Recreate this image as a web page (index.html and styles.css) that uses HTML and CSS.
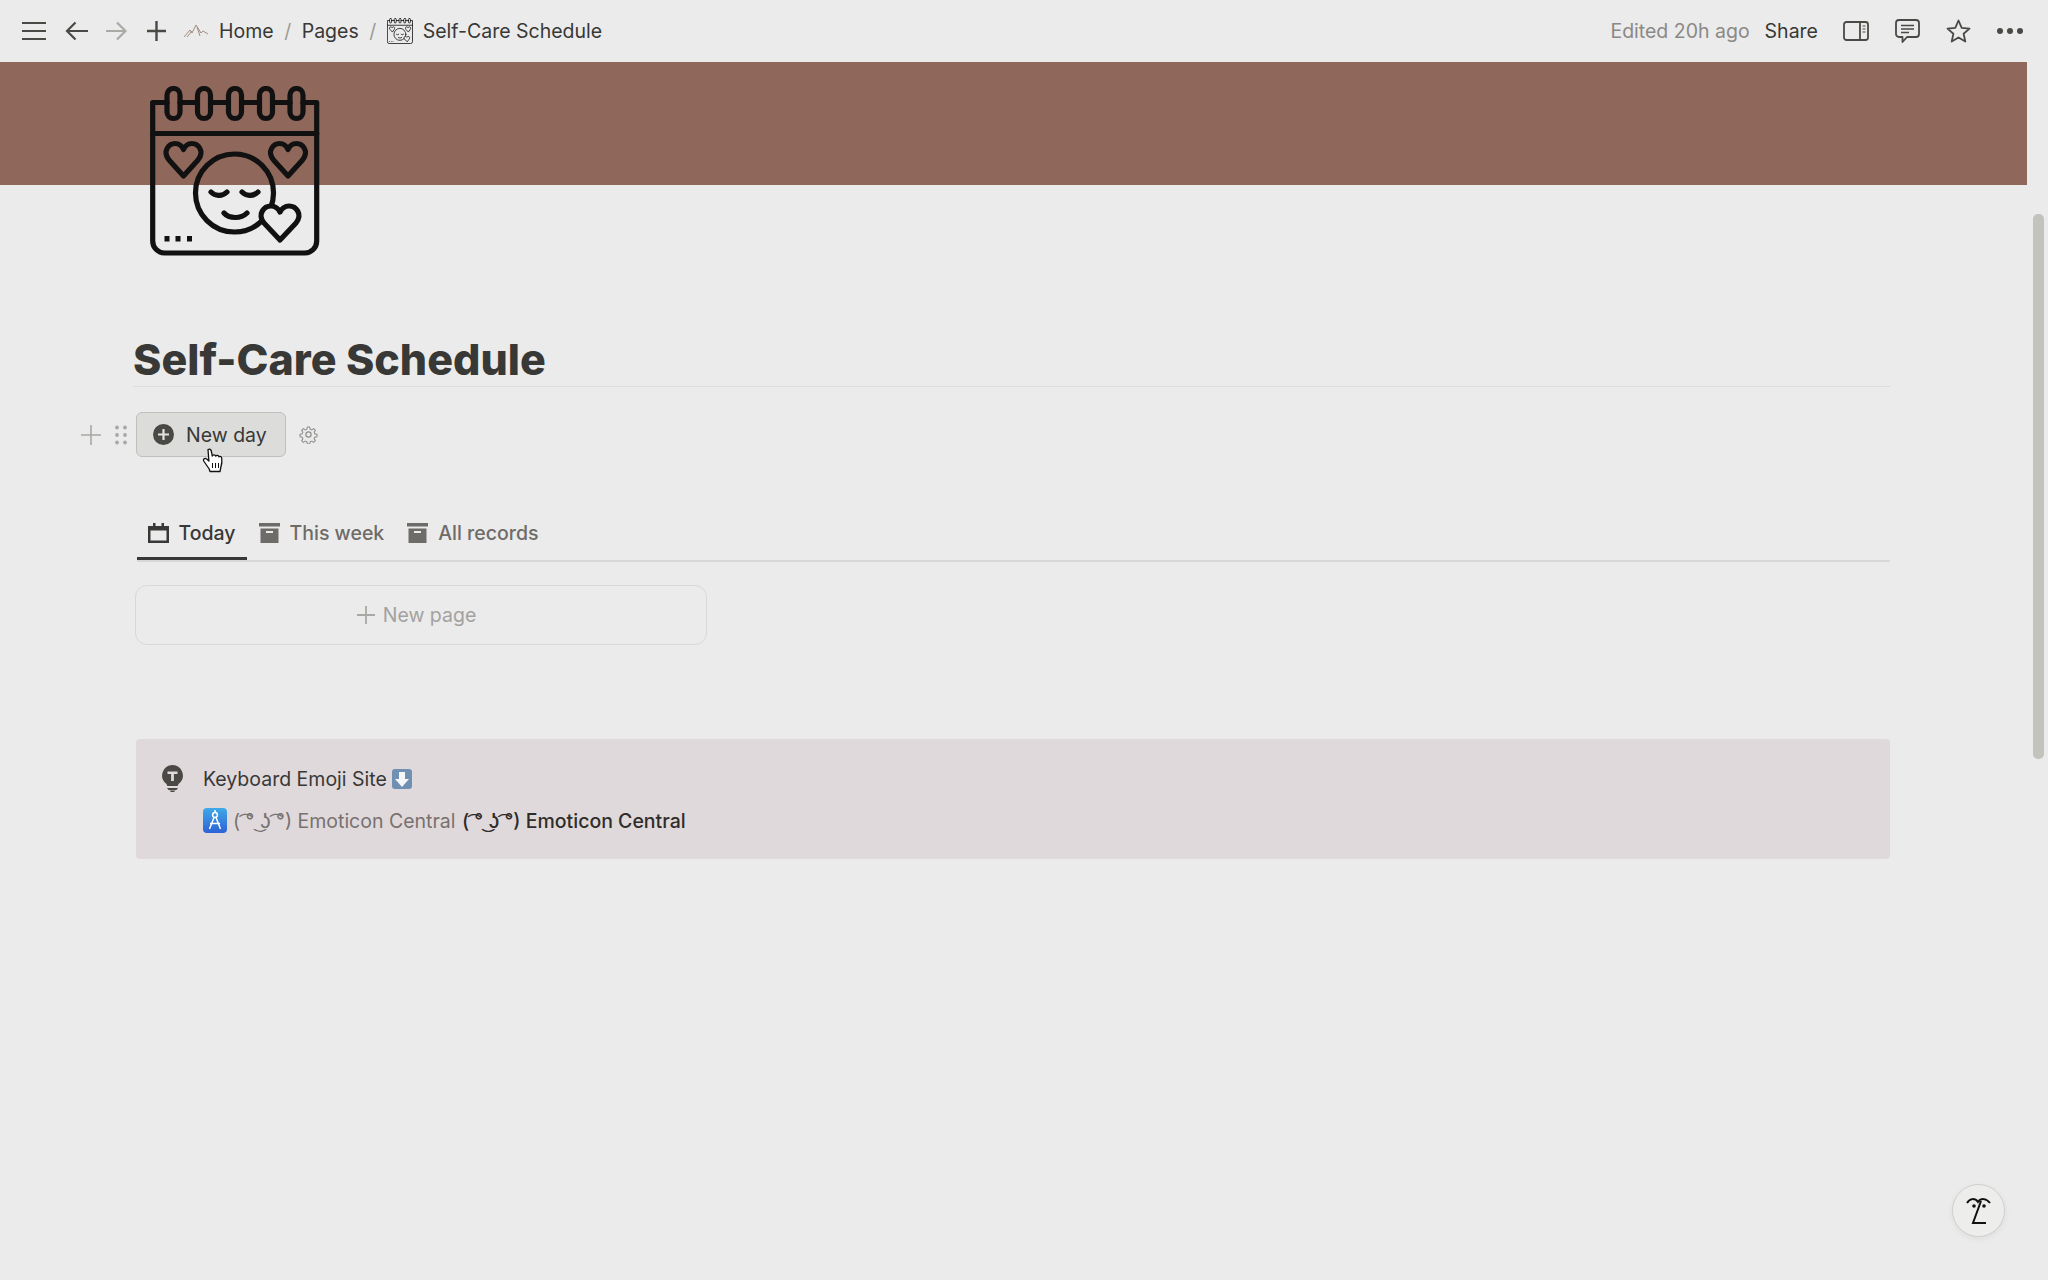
FILE: index.html
```html
<!DOCTYPE html>
<html lang="en">
<head>
<meta charset="utf-8">
<title>Self-Care Schedule</title>
<link rel="stylesheet" href="styles.css">
</head>
<body>
<svg class="defs" width="0" height="0" aria-hidden="true">
  <symbol id="cal" viewBox="0 0 170 170">
    <g fill="none" stroke="#111" stroke-width="5.200" stroke-linejoin="round" stroke-linecap="round">
      <path d="M17 16.500H2.700V155a12 12 0 0 0 12 12h140a12 12 0 0 0 12-12V16.500H153M30 16.500H47M61 16.500H78M92 16.500H109M123 16.500H140"/>
      <path d="M2.700 47.500H166.700"/>
      <rect x="17" y="2.500" width="13" height="30" rx="6.500"/>
      <rect x="47.500" y="2.500" width="13" height="30" rx="6.500"/>
      <rect x="78.500" y="2.500" width="13" height="30" rx="6.500"/>
      <rect x="109.500" y="2.500" width="13" height="30" rx="6.500"/>
      <rect x="140" y="2.500" width="13" height="30" rx="6.500"/>
      <path d="M33.500 90L19 74C12 65 19 57.500 25 57.500C29 57.500 32 60 33.500 63.500C35 60 38 57.500 42 57.500C48 57.500 55 65 48 74Z"/>
      <path d="M138 90L123.500 74C116.500 65 123.500 57.500 129.500 57.500C133.500 57.500 136.500 60 138 63.500C139.500 60 142.500 57.500 146.500 57.500C152.500 57.500 159.500 65 152.500 74Z"/>
      <circle cx="84.500" cy="107" r="39"/>
      <path fill="#ebebeb" d="M130 154L114 137C107 128 114 120 121 120C125 120 128.500 123 130 126C131.500 123 135 120 139 120C146 120 153 128 146 137Z"/>
      <path d="M61 106c4 4 11 5 16 0M92 106c4 4 11 5 16 0M74 127c5 6 17 6 23 0"/>
    </g>
    <path fill="#111" d="M14.500 150h5v5.500h-5zM25.500 150h5v5.500h-5zM37 150h5v5.500h-5z"/>
  </symbol>
  <symbol id="box" viewBox="0 0 21 20">
    <path fill="#6e6c68" d="M0 0h21v3.500H0zM1.500 5.500h18V20h-18zM7 8v2h7V8z" fill-rule="evenodd"/>
  </symbol>
</svg>

<header class="topbar">
  <svg class="ic burger" width="24" height="20" viewBox="0 0 24 20"><path d="M0 2H24M0 10H24M0 18H24" stroke="#4a4945" stroke-width="2.200" fill="none"/></svg>
  <svg class="ic back" width="23" height="20" viewBox="0 0 23 20"><path d="M23 10H2M10.500 1.500L2 10l8.500 8.500" stroke="#4a4945" stroke-width="2.200" fill="none"/></svg>
  <svg class="ic forward" width="21" height="20" viewBox="0 0 21 20"><path d="M0 10H19M11 1.500L19.500 10 11 18.500" stroke="#aaa9a6" stroke-width="2.200" fill="none"/></svg>
  <svg class="ic plus" width="19" height="20" viewBox="0 0 19 20"><path d="M9.500 0V20M0 10H19" stroke="#4a4945" stroke-width="2.400" fill="none"/></svg>
  <svg class="ic home" width="24" height="14" viewBox="0 0 24 14"><path d="M0 13L6 6l2 3 4-8 5 8 2-2 5 3M3 13l5-6M13 3l3 9" stroke="#a08c80" stroke-width="1" fill="none"/></svg>
  <span class="crumb">Home</span>
  <span class="sep">/</span>
  <span class="crumb">Pages</span>
  <span class="sep">/</span>
  <svg class="ic mini" width="26" height="26"><use href="#cal"/></svg>
  <span class="crumb">Self-Care Schedule</span>
  <span class="spacer"></span>
  <span class="edited">Edited 20h ago</span>
  <span class="share">Share</span>
  <svg class="ic act" width="26" height="20" viewBox="0 0 26 20"><rect x="1" y="1" width="24" height="18" rx="2.500" stroke="#4a4945" stroke-width="1.800" fill="none"/><path d="M17 1V19" stroke="#4a4945" stroke-width="1.800"/><path d="M19.500 5h3M19.500 8h3M19.500 11h3" stroke="#4a4945" stroke-width="1.200"/></svg>
  <svg class="ic act" width="25" height="24" viewBox="0 0 25 24"><path d="M4 1h17a3 3 0 0 1 3 3v11a3 3 0 0 1-3 3H12l-4.500 5v-5H4a3 3 0 0 1-3-3V4a3 3 0 0 1 3-3z" stroke="#4a4945" stroke-width="1.800" fill="none" stroke-linejoin="round"/><path d="M6 6.500h13M6 10h13M6 13.500h8" stroke="#4a4945" stroke-width="1.400"/></svg>
  <svg class="ic act" width="25" height="24" viewBox="0 0 25 24"><path d="M12.500 1.500l3.200 7.300 7.800.8-5.900 5.200 1.700 7.700-6.800-4-6.800 4 1.700-7.700L1.500 9.600l7.800-.8z" stroke="#4a4945" stroke-width="1.800" fill="none" stroke-linejoin="round"/></svg>
  <svg class="ic act" width="26" height="6" viewBox="0 0 26 6"><circle cx="3" cy="3" r="3" fill="#4a4945"/><circle cx="13" cy="3" r="3" fill="#4a4945"/><circle cx="23" cy="3" r="3" fill="#4a4945"/></svg>
</header>

<main class="main">
  <div class="banner"></div>
  <div class="content">
    <svg class="pageicon" width="170" height="170"><use href="#cal"/></svg>
    <h1 class="title">Self-Care Schedule</h1>

    <div class="btnrow">
      <div class="handles">
        <svg width="20" height="20" viewBox="0 0 20 20"><path d="M10 0V20M0 10H20" stroke="#a9a8a5" stroke-width="1.600" fill="none"/></svg>
        <svg width="12" height="20" viewBox="0 0 12 20"><g fill="#a9a8a5"><circle cx="2" cy="2.500" r="1.900"/><circle cx="10" cy="2.500" r="1.900"/><circle cx="2" cy="10" r="1.900"/><circle cx="10" cy="10" r="1.900"/><circle cx="2" cy="17.500" r="1.900"/><circle cx="10" cy="17.500" r="1.900"/></g></svg>
      </div>
      <button class="newday" type="button">
        <svg width="21" height="21" viewBox="0 0 21 21"><circle cx="10.500" cy="10.500" r="10.500" fill="#4a4945"/><path d="M10.500 5V16M5 10.500H16" stroke="#e2e2e1" stroke-width="2.200"/></svg>
        New day
      </button>
      <svg class="gear" width="19" height="19" viewBox="0 0 24 24" fill="none" stroke="#8f8e8b" stroke-width="1.500" stroke-linejoin="round"><circle cx="12" cy="12" r="3.300"/><path d="M10.300 1.500h3.400l.6 3 2.300 1 2.600-1.700 2.400 2.400-1.700 2.600 1 2.300 3 .6v3.400l-3 .6-1 2.300 1.700 2.600-2.400 2.400-2.600-1.700-2.300 1-.6 3h-3.400l-.6-3-2.300-1-2.600 1.700-2.400-2.400 1.700-2.600-1-2.300-3-.6v-3.400l3-.6 1-2.300-1.700-2.600 2.400-2.400 2.600 1.700 2.300-1z" transform="translate(1.200 1.200) scale(.9)"/></svg>
      <svg class="cursor" width="22" height="25" viewBox="0 0 22 25"><path d="M6 1.500c1.500-1 3 0 3.300 1.500l1 5c.5-1.500 3-1.500 3.400.2.700-1.200 2.900-1 3.200.6.900-.8 2.700-.3 2.800 1.200.4 3 .2 6-.7 8.500l-1 5H8l-.8-2.500L1.700 13c-1-1.500 1-3.500 3-2l2.200 2z" fill="#fff" stroke="#111" stroke-width="1.300" stroke-linejoin="round"/><path d="M10.500 15v5M13.500 15v5M16.500 15v5" stroke="#111" stroke-width="1"/></svg>
    </div>

    <nav class="tabs">
      <div class="tab active">
        <svg width="21" height="20" viewBox="0 0 21 20"><path d="M5 0h2.500v3h6V0H16v3h5v17H0V3h5zM2.500 7.500V17.500h16V7.500z" fill="#383836" fill-rule="evenodd"/></svg>
        Today
      </div>
      <div class="tab">
        <svg width="21" height="20"><use href="#box"/></svg>
        This week
      </div>
      <div class="tab">
        <svg width="21" height="20"><use href="#box"/></svg>
        All records
      </div>
    </nav>

    <div class="newpage">
      <svg width="18" height="18" viewBox="0 0 18 18"><path d="M9 0V18M0 9H18" stroke="#a9a8a5" stroke-width="1.800" fill="none"/></svg>
      New page
    </div>

    <aside class="callout">
      <svg class="bulb" width="21" height="27" viewBox="0 0 21 27"><path d="M10.500 0a10.500 10.500 0 0 1 6 19l-.8 2H5.300l-.8-2a10.500 10.500 0 0 1 6-19z" fill="#4a4945"/><path d="M5 23h11l-1.500 2h-8zM7.500 25.500h6L12 27H9z" fill="#4a4945"/><path d="M5.500 6.500h10v2.600h-3.600V16H9.100V9.100H5.500z" fill="#e0d9dc"/></svg>
      <div class="callout-body">
        <p class="line"><span>Keyboard Emoji Site</span><svg class="emoji" width="20" height="20" viewBox="0 0 20 20"><rect width="20" height="20" rx="3" fill="#6f8fb3"/><path d="M7 3h6v7h4l-7 8-7-8h4z" fill="#f4f6f8"/></svg></p>
        <p class="line"><svg class="emoji" width="24" height="25" viewBox="0 0 24 25"><defs><linearGradient id="blue" x1="0" y1="0" x2="0" y2="1"><stop offset="0" stop-color="#3fa9e8"/><stop offset="1" stop-color="#2c62d6"/></linearGradient></defs><rect width="24" height="25" rx="4" fill="url(#blue)"/><g stroke="#fff" stroke-width="1.500" fill="none"><circle cx="12" cy="7" r="2.400"/><path d="M11 9.500L6.500 21M13 9.500L17.500 21M7 15.500h10M12 2v2.500"/></g></svg><span class="muted">( ͡° ͜ʖ ͡°) Emoticon Central</span><span class="strong">( ͡° ͜ʖ ͡°) Emoticon Central</span></p>
      </div>
    </aside>
  </div>
</main>

<div class="scrollthumb"></div>
<div class="helpbtn">
  <svg width="28" height="32" viewBox="0 0 28 32"><path d="M2 8c3-5 8-5 11-1 3-4 8-4 12 1M16 6L8 28h13" fill="none" stroke="#111" stroke-width="2"/><circle cx="9" cy="11" r="1.800" fill="#111"/><circle cx="19" cy="11" r="1.800" fill="#111"/></svg>
</div>
</body>
</html>
```

FILE: styles.css
```css
* { box-sizing: border-box; }
html, body { margin: 0; height: 100%; }
body {
  position: relative;
  height: 1280px;
  overflow: hidden;
  background: #ebebeb;
  color: #383836;
  font-family: Inter, "DejaVu Sans", "Noto Sans", sans-serif;
  font-size: 19.500px;
}
.defs { position: absolute; }
.ic { flex: none; display: block; }

.topbar {
  display: flex;
  align-items: center;
  height: 62px;
  padding: 0 25px 0 22px;
  line-height: 24px;
}
.back { margin-left: 19px; }
.forward { margin-left: 18px; }
.plus { margin-left: 20px; }
.home { margin-left: 18px; margin-right: 11px; }
.sep { margin: 0 10.500px; color: #9c9b98; }
.mini { margin-right: 10px; }
.spacer { flex: 1; }
.edited { color: #8a8986; }
.share { margin-left: 15px; margin-right: 25px; }
.act + .act { margin-left: 26px; }

.main { margin-right: 21px; }
.banner { height: 123px; background: #8f685b; }
.content { padding: 0 137px 0 133px; }
.pageicon { display: block; margin: -99px 0 0 17px; position: relative; }

.title {
  margin: 77px 0 0;
  height: 54px;
  font-size: 43px;
  line-height: 52px;
  font-weight: 800;
  color: #383836;
  border-bottom: 1px solid #dcdcdb;
}

.btnrow {
  position: relative;
  display: flex;
  align-items: center;
  gap: 13px;
  margin: 25px 0 0 3px;
}
.handles {
  position: absolute;
  left: -55px;
  top: 13px;
  display: flex;
  gap: 14px;
}
.newday {
  display: flex;
  align-items: center;
  gap: 12px;
  width: 150px;
  height: 45px;
  padding: 0 0 0 16px;
  font: inherit;
  color: #383836;
  background: #dcdcdb;
  border: 1.500px solid #bfbfbe;
  border-radius: 6px;
}
.cursor { position: absolute; left: 66px; top: 36px; }

.tabs {
  display: flex;
  height: 52px;
  margin: 53px 0 0 3.500px;
  border-bottom: 2px solid #d8d8d7;
  color: #6e6c68;
  font-weight: 500;
}
.tab {
  display: flex;
  align-items: center;
  gap: 10px;
  padding: 0 11px 4px;
  height: 50px;
  margin-right: 1px;
}
.tab.active { color: #383836; border-bottom: 3px solid #383836; padding-bottom: 1px; }

.newpage {
  display: flex;
  align-items: center;
  justify-content: center;
  gap: 8px;
  width: 572px;
  height: 60px;
  margin: 23px 0 0 1.500px;
  padding-right: 8px;
  color: #a3a2a0;
  border: 1.500px solid #d8d8d7;
  border-radius: 12px;
}

.callout {
  display: flex;
  gap: 20px;
  height: 120px;
  margin: 94px 0 0 3px;
  padding: 26px 26px 0;
  background: #e0d9dc;
  border-radius: 4px;
}
.bulb { flex: none; }
.line {
  display: flex;
  align-items: center;
  gap: 5px;
  height: 41px;
  margin: 0;
  white-space: pre;
}
.line:first-child { margin: -7px 0 1px; }
.muted { color: #77716f; margin-left: 1px; }
.strong { font-weight: 500; color: #2f2d2a; margin-left: 1.500px; }
.emoji { flex: none; }

.scrollthumb {
  position: absolute;
  left: 2033px;
  top: 214px;
  width: 11px;
  height: 545px;
  background: #c3c3bd;
  border-radius: 5px;
}
.helpbtn {
  position: absolute;
  left: 1952px;
  top: 1184px;
  width: 53px;
  height: 53px;
  display: flex;
  align-items: center;
  justify-content: center;
  background: #ededec;
  border: 1.500px solid #cfcfce;
  border-radius: 50%;
  box-shadow: 0 2px 6px rgba(0,0,0,.06);
}
```
